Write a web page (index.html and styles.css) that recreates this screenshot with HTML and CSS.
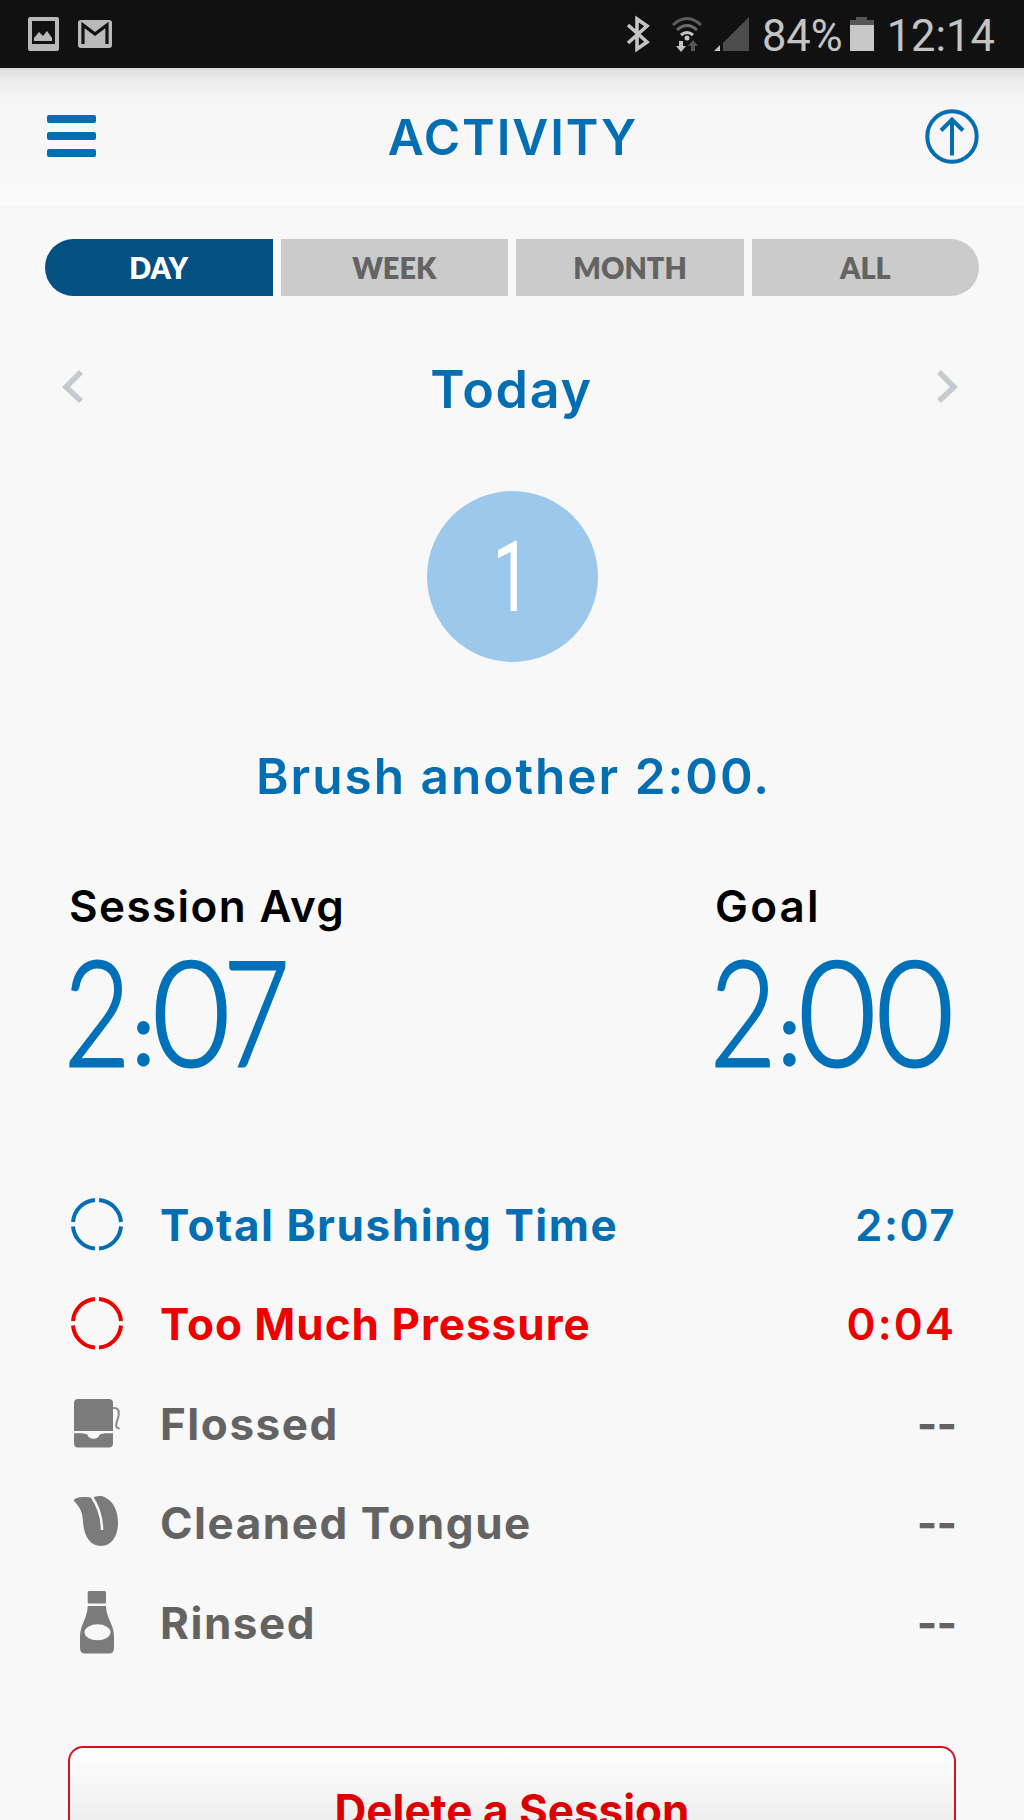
FILE: index.html
```
<!DOCTYPE html>
<html lang="en">
<head>
  <meta charset="UTF-8">
  <meta name="viewport" content="width=device-width, initial-scale=1.0">
  <title>Activity</title>
  <link rel="stylesheet" href="styles.css">
</head>
<body>
  <div class="screen">
    <div class="status-bar">
      <div class="status-left">
        <svg width="31" height="34" viewBox="0 0 31 34">
          <path fill="#b9b9b9" fill-rule="evenodd" d="M2 0h27a2 2 0 0 1 2 2v30a2 2 0 0 1-2 2H2a2 2 0 0 1-2-2V2a2 2 0 0 1 2-2zM4 4v23h23V4z"/>
          <path fill="#b9b9b9" d="M6 24v-3l5-6 4 4 4-5 5 7v3z"/>
        </svg>
        <svg width="34" height="28" viewBox="0 0 34 28">
          <rect width="34" height="28" rx="3" fill="#b9b9b9"/>
          <path d="M5 24V5l12 9 12-9v19" fill="none" stroke="#111" stroke-width="3.2"/>
        </svg>
      </div>
      <div class="status-right">
        <svg class="bluetooth" width="24" height="34" viewBox="0 0 24 34">
          <path d="M2 8l19 17-10 7V2l10 7L2 26" fill="none" stroke="#c4c4c4" stroke-width="3.6"/>
        </svg>
        <svg class="wifi" width="30" height="35" viewBox="0 0 30 35">
          <g fill="none" stroke-width="3">
            <path d="M1 8q14-13 28 0" stroke="#5c5c5c"/>
            <path d="M5 13q10-9 20 0" stroke="#6c6c6c"/>
            <path d="M9 18q6-5 12 0" stroke="#c4c4c4"/>
          </g>
          <circle cx="15" cy="21" r="2.5" fill="#c4c4c4"/>
          <path d="M7 24h4v5h3l-5 6-5-6h3z" fill="#c4c4c4"/>
          <path d="M19 34h4v-5h3l-5-6-5 6h3z" fill="#555"/>
        </svg>
        <svg class="signal" width="35" height="34" viewBox="0 0 35 34">
          <path d="M35 0v34H9V26z" fill="#4d4d4d"/>
          <path d="M6 28v6H0z" fill="#c4c4c4"/>
        </svg>
        <span class="battery-text">84%</span>
        <svg class="battery" width="24" height="34" viewBox="0 0 24 34">
          <path d="M6 0h11v3h7v6H0V3h6z" fill="#555"/>
          <path d="M0 8h24v26H0z" fill="#c8c8c8"/>
        </svg>
        <span class="clock">12:14</span>
      </div>
    </div>

    <div class="header">
      <svg width="50" height="44" viewBox="0 0 50 44" fill="#036eb1">
        <rect x="0" y="0" width="49" height="8" rx="2"/>
        <rect x="0" y="17" width="49" height="8" rx="2"/>
        <rect x="0" y="34" width="49" height="8" rx="2"/>
      </svg>
      <h1>ACTIVITY</h1>
      <svg width="54" height="56" viewBox="0 0 54 56" fill="none" stroke="#036eb1" stroke-width="4">
        <ellipse cx="27" cy="27.500" rx="24.700" ry="25.300"/>
        <path d="M27 46.500V10.500M16 21.500l11-11 11 11"/>
      </svg>
    </div>

    <div class="tabs">
      <div class="tab active"><span>DAY</span></div>
      <div class="tab"><span>WEEK</span></div>
      <div class="tab"><span>MONTH</span></div>
      <div class="tab"><span>ALL</span></div>
    </div>

    <div class="date-nav">
      <svg width="22" height="34" viewBox="0 0 22 34" fill="none" stroke="#c6c9cd" stroke-width="5.500">
        <path d="M19 2L4 17l15 14"/>
      </svg>
      <h2>Today</h2>
      <svg width="22" height="34" viewBox="0 0 22 34" fill="none" stroke="#c6c9cd" stroke-width="5.500">
        <path d="M3 2l15 15L3 31"/>
      </svg>
    </div>

    <div class="count"><span>1</span></div>
    <div class="message">Brush another 2:00.</div>

    <div class="stats">
      <div class="stat">
        <div class="stat-label">Session Avg</div>
        <div class="stat-value"><span class="narrow">2</span><span class="colon">:</span><span class="tight">0</span><span class="narrow">7</span></div>
      </div>
      <div class="stat goal">
        <div class="stat-label">Goal</div>
        <div class="stat-value"><span class="narrow">2</span><span class="colon">:</span>00</div>
      </div>
    </div>

    <div class="list">
      <div class="row blue">
        <svg width="56" height="64" viewBox="0 0 56 64" fill="none" stroke="currentColor" stroke-width="4">
          <path d="M30 6a24 24 0 0 1 22 22M52 32.500a24 24 0 0 1-22 22M26 54.500a24 24 0 0 1-22-22M4 28a24 24 0 0 1 22-22"/>
        </svg>
        <span class="row-label">Total Brushing Time</span>
        <span class="row-value">2:07</span>
      </div>
      <div class="row red">
        <svg width="56" height="64" viewBox="0 0 56 64" fill="none" stroke="currentColor" stroke-width="4">
          <path d="M30 6a24 24 0 0 1 22 22M52 32.500a24 24 0 0 1-22 22M26 54.500a24 24 0 0 1-22-22M4 28a24 24 0 0 1 22-22"/>
        </svg>
        <span class="row-label pressure">Too Much Pressure</span>
        <span class="row-value wide">0:04</span>
      </div>
      <div class="row">
        <svg width="56" height="64" viewBox="0 0 56 64" fill="#7b7b7b">
          <path d="M9 6h31q4 0 4 4v28H5V10q0-4 4-4z"/>
          <path d="M5 40.300h8l5 1q2 4.500 6.500 4.500t6.500-4.500l5-1h8V50q0 4.500-4 4.500H9q-4 0-4-4.500z"/>
          <path d="M44 15c5-.500 6.500 2 5.500 8-1 5-3.500 9-2 11 .800 1.200 2 1.500 3 1" fill="none" stroke="#8a8a8a" stroke-width="2"/>
        </svg>
        <span class="row-label">Flossed</span>
        <span class="row-value empty">--</span>
      </div>
      <div class="row">
        <svg width="56" height="64" viewBox="0 0 56 64">
          <path fill="#7b7b7b" d="M5 9c-1-4 12-5 18-3 4-2 10-3 14 0 8 4 12 14 12 25 0 14-7 23-17 23-11 0-17-10-18-24C13.500 20 11 15 5 9z"/>
          <path d="M23 5c6 9 10 18 10 33" fill="none" stroke="#f8f8f9" stroke-width="2.500"/>
        </svg>
        <span class="row-label">Cleaned Tongue</span>
        <span class="row-value empty">--</span>
      </div>
      <div class="row">
        <svg width="56" height="64" viewBox="0 0 56 64" fill="#7b7b7b">
          <rect x="18.700" y="-1" width="18.300" height="12.500" rx="1.500"/>
          <path fill-rule="evenodd" d="M18.700 14H37c0 12 8 18 8 31v11q0 5.500-5 5.500H16q-5 0-5-5.500V45c0-13 7.700-19 7.700-31zM15.500 40.300a13 8 0 0 0 26 0 13 8 0 0 0-26 0z"/>
        </svg>
        <span class="row-label">Rinsed</span>
        <span class="row-value empty">--</span>
      </div>
    </div>

    <div class="delete-button">Delete a Session</div>
  </div>
</body>
</html>
```
FILE: styles.css
```
* {
  box-sizing: border-box;
}

body {
  margin: 0;
  font-family: Inter, "Liberation Sans", sans-serif;
  background-color: #f8f8f9;
}

.screen {
  width: 1024px;
  height: 1820px;
  overflow: hidden;
}

svg {
  display: block;
  flex-shrink: 0;
  overflow: visible;
}

.status-bar {
  display: flex;
  justify-content: space-between;
  height: 68px;
  padding: 0 29px 0 28px;
  background-color: #111;
  color: #c4c4c4;
  font-family: Roboto, sans-serif;
  font-size: 43.5px;
  line-height: 60px;
}

.status-left,
.status-right {
  display: flex;
  align-items: center;
}

.status-left {
  gap: 19px;
}

.status-right span {
  padding-top: 5px;
}

.bluetooth {
  margin-right: 22px;
}

.wifi {
  margin-right: 12px;
}

.signal {
  margin-right: 13px;
}

.battery {
  margin-left: 7px;
}

.clock {
  margin-left: 13px;
}

.header {
  display: flex;
  align-items: center;
  justify-content: space-between;
  height: 138px;
  padding: 0 45px 0 47px;
  background: linear-gradient(#dcdcdc, #ececec 12px, #f6f6f6 32px, #f7f7f7 90px, #fbfbfb);
}

h1,
h2 {
  margin: 0;
  color: #036eb1;
  font-weight: 600;
}

h1 {
  padding-left: 4px;
  font-size: 49.5px;
  letter-spacing: 1.9px;
}

h2 {
  padding: 4px 0 0 3px;
  font-size: 52px;
  letter-spacing: 1.7px;
}

.tabs {
  display: flex;
  gap: 8px;
  height: 57px;
  margin: 33px 45px 0 45px;
  border-radius: 29px;
  overflow: hidden;
}

.tab {
  flex: 1;
  background-color: #cbcbcb;
  color: #636363;
  font-family: Lato, sans-serif;
  font-size: 31px;
  font-weight: 800;
  line-height: 57px;
  text-align: center;
}

.tab span {
  display: inline-block;
  transform: scaleX(0.93);
}

.tab.active {
  background-color: #035082;
  color: #fff;
}

.date-nav {
  display: flex;
  align-items: center;
  justify-content: space-between;
  height: 100px;
  margin-top: 41px;
  padding: 0 66px 0 62px;
}

.count {
  display: flex;
  align-items: center;
  justify-content: center;
  width: 171px;
  height: 171px;
  margin: 54px auto 0;
  border-radius: 50%;
  background-color: #9cc8ec;
  color: #fff;
  font-family: Roboto, sans-serif;
  font-size: 99px;
  font-weight: 400;
}

.count span {
  transform: scaleX(0.7);
}

.message {
  margin-top: 64px;
  padding-left: 3px;
  color: #036eb1;
  font-size: 49.5px;
  font-weight: 600;
  line-height: 100px;
  letter-spacing: 2px;
  text-align: center;
}

.stats {
  display: flex;
  justify-content: space-between;
  margin-top: 50px;
  padding: 0 69px;
}

.goal {
  width: 240px;
}

.stat-label {
  font-size: 44px;
  font-weight: 600;
  line-height: 60px;
  letter-spacing: 1.4px;
}

.goal .stat-label {
  letter-spacing: 2.2px;
}

.stat-value {
  height: 120px;
  margin: 14px 0 0 -5px;
  color: #0071b8;
  font-family: Lato, sans-serif;
  font-size: 146px;
  font-weight: 300;
  line-height: 120px;
  white-space: nowrap;
  -webkit-text-stroke: 3px #0071b8;
  transform: scaleX(0.92);
  transform-origin: left;
}

.narrow {
  display: inline-block;
  transform: scaleX(0.85);
  transform-origin: left;
}

/* smaller colon sits low between the digits */
.colon {
  margin: 0 -2px 0 -10px;
  font-size: 90px;
  font-weight: 700;
  line-height: 1;
  -webkit-text-stroke: 0;
}

.tight {
  letter-spacing: -8px;
}

.list {
  margin-top: 105px;
  padding: 0 69px;
}

.row {
  display: flex;
  align-items: center;
  height: 99.5px;
  color: #636363;
  font-size: 44px;
}

.row svg {
  margin-top: 2px;
}

.row-label {
  flex: 1;
  margin-left: 35px;
  font-weight: 700;
  letter-spacing: 1.55px;
}

.row-value {
  margin-right: -1px;
  font-weight: 600;
  letter-spacing: 1.5px;
}

.row-label.pressure {
  letter-spacing: 1px;
}

.row-value.wide {
  letter-spacing: 2px;
}

.row-value.empty {
  font-weight: 700;
  letter-spacing: -1px;
}

.blue {
  color: #036eb1;
}

.red {
  color: #ee0000;
}

.delete-button {
  height: 132px;
  margin: 73px 68px 0;
  border: 2px solid #cf1420;
  border-radius: 15px;
  background: linear-gradient(#fff, #f7f7f7 35px, #eee 74px);
  color: #dc0000;
  font-size: 44px;
  font-weight: 700;
  line-height: 124px;
  text-align: center;
}
```
